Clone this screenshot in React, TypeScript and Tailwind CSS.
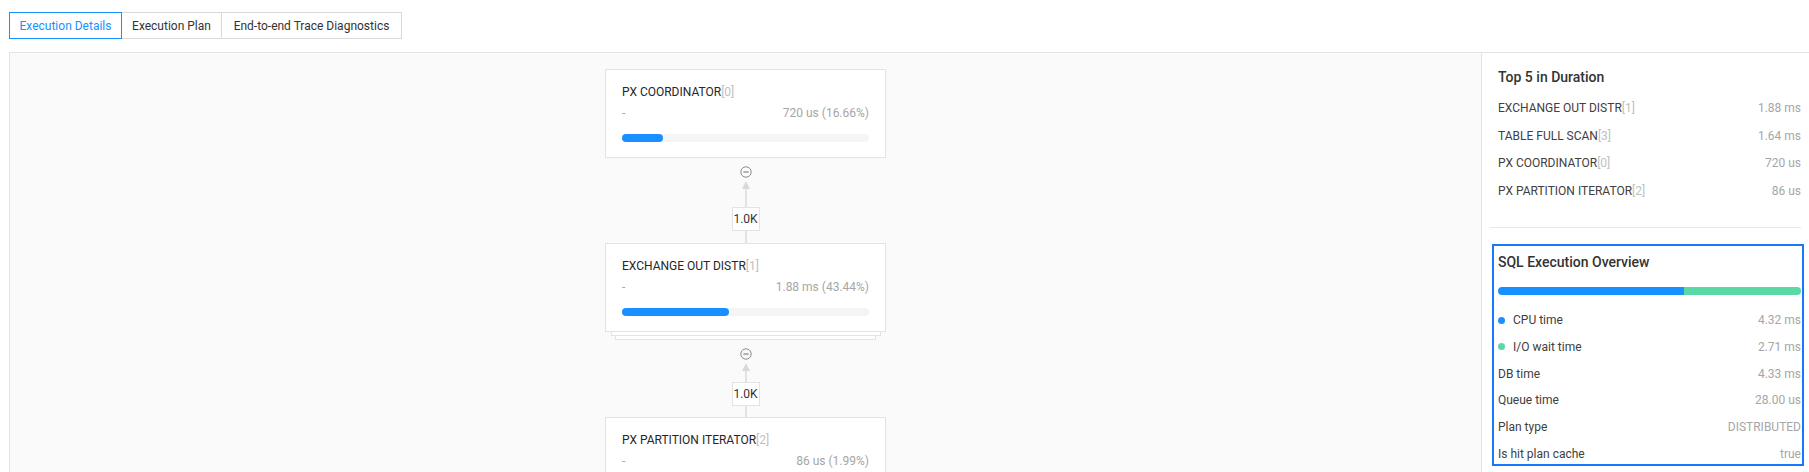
import React from "react";

const FONT = { fontFamily: 'Roboto, "Open Sans", sans-serif' };

type Node = { name: string; idx: number; dur: string; pct: number };

const nodes: Node[] = [
  { name: "PX COORDINATOR", idx: 0, dur: "720 us (16.66%)", pct: 16.66 },
  { name: "EXCHANGE OUT DISTR", idx: 1, dur: "1.88 ms (43.44%)", pct: 43.44 },
  { name: "PX PARTITION ITERATOR", idx: 2, dur: "86 us (1.99%)", pct: 1.99 },
];

const top5 = [
  { name: "EXCHANGE OUT DISTR", idx: 1, value: "1.88 ms" },
  { name: "TABLE FULL SCAN", idx: 3, value: "1.64 ms" },
  { name: "PX COORDINATOR", idx: 0, value: "720 us" },
  { name: "PX PARTITION ITERATOR", idx: 2, value: "86 us" },
];

function MinusCircle() {
  return (
    <svg width="12" height="12" viewBox="0 0 12 12" fill="none">
      <circle cx="6" cy="6" r="5.2" stroke="#8c8c8c" strokeWidth="1" />
      <path d="M3.4 6h5.2" stroke="#8c8c8c" strokeWidth="1.3" />
    </svg>
  );
}

function PlanNode({ node }: { node: Node }) {
  return (
    <div className="w-[281px] shrink-0 border border-[#e3e3e3] bg-white px-4 pt-3 pb-[15px]">
      <div className="text-[12px] leading-[20px] text-[#262626]">
        {node.name}
        <span className="text-[#bfbfbf]">[{node.idx}]</span>
      </div>
      <div className="mt-px flex justify-between text-[12px] leading-[20px] text-[#a6a6a6]">
        <span>-</span>
        <span>{node.dur}</span>
      </div>
      <div className="mt-[11px] h-2 rounded-full bg-[#f5f5f5]">
        <div className="h-2 rounded-full bg-[#1890ff]" style={{ width: `${Math.max(node.pct, 3)}%` }} />
      </div>
    </div>
  );
}

function Edge({ top, bottom }: { top: number; bottom: number }) {
  return (
    <div className="flex flex-col items-center">
      <div className="mt-2">
        <MinusCircle />
      </div>
      <div className="mt-[3px] flex flex-col items-center">
        <div className="h-0 w-0 border-x-[4px] border-b-[8px] border-x-transparent border-b-[#d9d9d9]" />
        <div className="w-[2px] bg-[#e3e3e3]" style={{ height: top - 8 }} />
      </div>
      <div className="flex h-6 w-[28px] items-center justify-center border border-[#e3e3e3] bg-white text-[12px] text-[#333]">
        1.0K
      </div>
      <div className="w-[2px] bg-[#e3e3e3]" style={{ height: bottom }} />
    </div>
  );
}

function Tabs() {
  return (
    <div className="ml-[9px] mt-3 flex h-[27px] text-[12px]">
      <div className="flex w-[113px] items-center justify-center border border-[#1890ff] text-[#1890ff]">
        Execution Details
      </div>
      <div className="flex w-[100px] items-center justify-center border-y border-r border-[#d9d9d9] text-[#333]">
        Execution Plan
      </div>
      <div className="flex w-[180px] items-center justify-center border-y border-r border-[#d9d9d9] text-[#333]">
        End-to-end Trace Diagnostics
      </div>
    </div>
  );
}

function Graph() {
  return (
    <div className="flex w-[1471px] shrink-0 flex-col items-center overflow-hidden bg-[#fafafa] pt-4">
      <PlanNode node={nodes[0]} />
      <Edge top={26} bottom={12} />
      <div className="flex flex-col items-center">
        <PlanNode node={nodes[1]} />
        <div className="h-[4px] w-[270px] border-x border-b border-[#e3e3e3] bg-white" />
        <div className="h-[4px] w-[261px] border-x border-b border-[#e3e3e3] bg-white" />
      </div>
      <Edge top={19} bottom={11} />
      <PlanNode node={nodes[2]} />
    </div>
  );
}

function SidePanel() {
  return (
    <div className="flex-1 border-l border-[#e3e3e3] bg-white">
      <div className="pl-4 pr-2 pt-[13px]">
        <div className="text-[14px] font-medium leading-[22px] text-[#333]">Top 5 in Duration</div>
        <div className="mt-[6px]">
          {top5.map((r) => (
            <div key={r.name} className="flex h-[27.8px] items-center justify-between text-[12px] text-[#404040]">
              <span>
                {r.name}
                <span className="text-[#bfbfbf]">[{r.idx}]</span>
              </span>
              <span className="text-[#a6a6a6]">{r.value}</span>
            </div>
          ))}
        </div>
      </div>
      <div className="mx-2 mt-[22px] border-t border-[#e8e8e8]" />
      <div className="ml-[10px] mr-[5px] mt-4 border-2 border-[#1677ff] pl-[4px] pr-[1px] pt-[5px]">
        <div className="text-[14px] font-medium leading-[22px] text-[#333]">SQL Execution Overview</div>
        <div className="mt-[14px] flex h-2 overflow-hidden rounded-full">
          <div className="h-2 bg-[#1890ff]" style={{ width: "61.5%" }} />
          <div className="h-2 flex-1 bg-[#5ad8a6]" />
        </div>
        <div className="mt-[14px] flex flex-col gap-[6.7px] pt-px text-[12px] leading-[20px]">
          <Row label="CPU time" value="4.32 ms" dot="bg-[#1890ff]" />
          <Row label="I/O wait time" value="2.71 ms" dot="bg-[#5ad8a6]" />
          <Row label="DB time" value="4.33 ms" />
          <Row label="Queue time" value="28.00 us" />
          <Row label="Plan type" value="DISTRIBUTED" />
          <Row label="Is hit plan cache" value="true" />
        </div>
      </div>
    </div>
  );
}

function Row({ label, value, dot }: { label: string; value: string; dot?: string }) {
  return (
    <div className="flex items-center justify-between">
      <div className="flex items-center text-[#404040]">
        {dot && <span className={`mr-2 inline-block h-[7px] w-[7px] rounded-full ${dot}`} />}
        {label}
      </div>
      <span className="text-[#a6a6a6]">{value}</span>
    </div>
  );
}

export default function App() {
  return (
    <div className="h-[472px] w-[1809px] overflow-hidden bg-white" style={FONT}>
      <Tabs />
      <div className="ml-[9px] mt-[13px] flex h-[420px] border-l border-t border-[#e3e3e3]">
        <Graph />
        <SidePanel />
      </div>
    </div>
  );
}
